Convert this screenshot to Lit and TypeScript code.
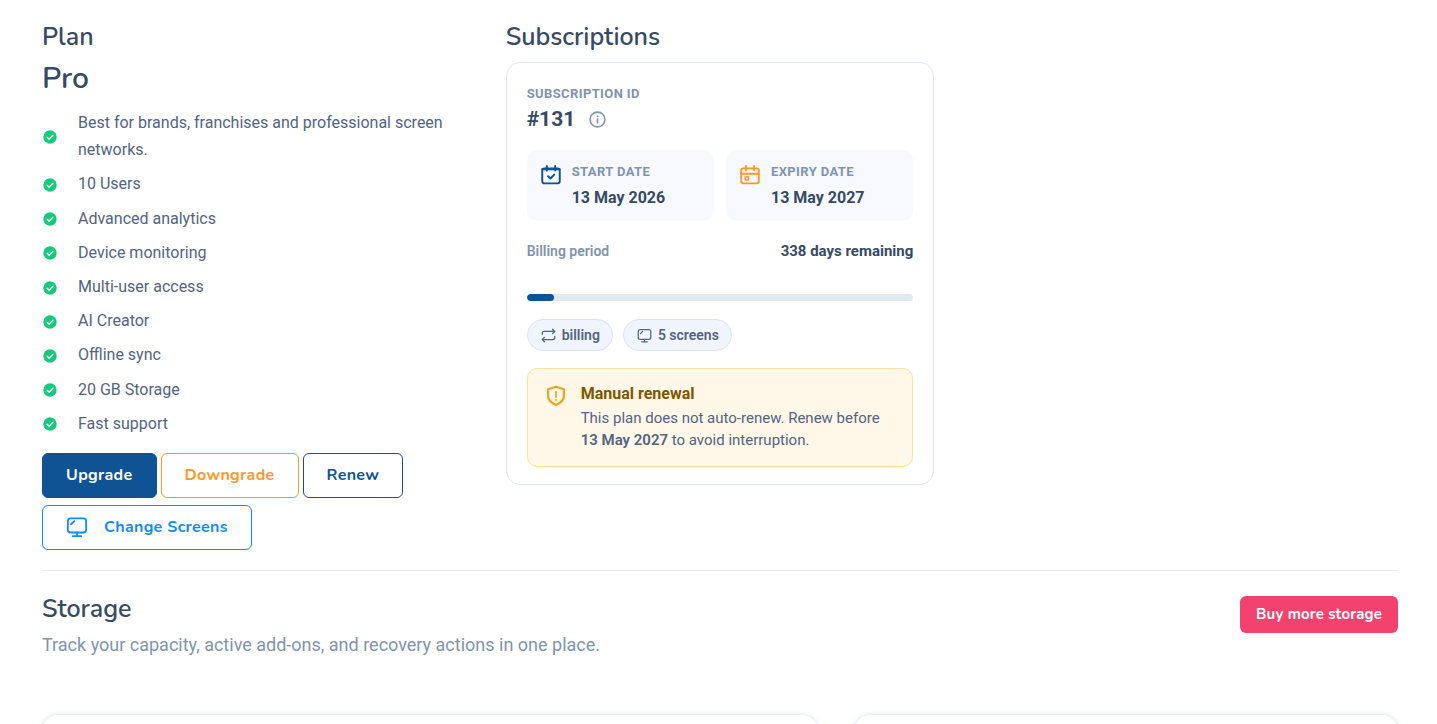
import { LitElement, html, css, svg } from "lit";
import { customElement, property } from "lit/decorators.js";

const glyphs: Record<string, unknown> = {
  check: svg`<circle cx="12" cy="12" r="11.5" fill="currentColor" stroke="none"/><path d="M7 12.4l3.4 3.3L17 9" stroke="#fff" stroke-width="2.4"/>`,
  screen: svg`<rect x="2" y="2.5" width="20" height="15.5" rx="3"/><path d="M12 18v4M7.5 22h9M5.5 9l3.5-3.5"/>`,
  info: svg`<circle cx="12" cy="12" r="10.5"/><path d="M12 11.500v5.500"/><circle cx="12" cy="7.3" r="1.3" fill="currentColor" stroke="none"/>`,
  calendarCheck: svg`<rect x="1.5" y="4" width="21" height="18" rx="2.5"/><path d="M1.5 5h21"/><path d="M7 1v5.5M17 1v5.5M8.500 13.5l2.700 2.700 4.800-4.700"/>`,
  calendar: svg`<rect x="1.5" y="4" width="21" height="18" rx="2.5"/><path d="M1.5 10.500h21M7 1v5.5M17 1v5.5"/><rect x="6.3" y="14.2" width="3.8" height="3.8" stroke-width="1.8" stroke-linejoin="miter"/>`,
  repeat: svg`<path d="M2 10.5V8.7Q2 5.5 5.2 5.5H22M18.5 2L22 5.5 18.5 9M22 13.5v1.8q0 3.2-3.2 3.2H2M5.5 15L2 18.5 5.5 22"/>`,
  shield: svg`<path d="M12 1L21.500 4v8.3c0 5-4.700 8.3-9.500 10.6-4.800-2.300-9.500-5.600-9.500-10.600V4z"/><path d="M12 7v6.500M12 16.300v1" stroke-width="2"/>`,
};

@customElement("ui-icon")
class UiIcon extends LitElement {
  @property() name = "check";
  static styles = css`
    :host { display: inline-flex; flex: none; width: 1em; height: 1em; }
    svg { display: block; width: 100%; height: 100%; fill: none; stroke: currentColor; stroke-width: var(--stroke, 2); stroke-linecap: round; stroke-linejoin: round; overflow: visible; }
  `;
  render() {
    return html`<svg viewBox="0 0 24 24" aria-hidden="true">${glyphs[this.name]}</svg>`;
  }
}

@customElement("app-root")
class AppRoot extends LitElement {
  features = [
    "Best for brands, franchises and professional screen networks.",
    "10 Users",
    "Advanced analytics",
    "Device monitoring",
    "Multi-user access",
    "AI Creator",
    "Offline sync",
    "20 GB Storage",
    "Fast support",
  ];
  elapsed = 7;

  static styles = css`
    :host { display: block; height: 100vh; overflow: hidden; box-sizing: border-box; background: #fff; color: #526484; font: 400 16px/1.7 Roboto, sans-serif; }
    *, *::before, *::after { box-sizing: border-box; }
    h2, h3, h4, p, ul, dl, dd { margin: 0; padding: 0; }
    .page { padding: 20px 39px 0 42px; }
    .columns { display: grid; grid-template-columns: repeat(3, minmax(0, 1fr)); gap: 35px; align-items: start; }
    .title { font: 650 25px/34px Nunito, Lato, sans-serif; color: #364a63; }
    .plan-name { margin-top: 7px; font: 650 30px/36px Nunito, Lato, sans-serif; color: #364a63; }
    .features { display: flex; flex-direction: column; gap: 7px; margin-top: 12px; list-style: none; }
    .feature { display: flex; align-items: center; gap: 21px; }
    .feature ui-icon { font-size: 14px; margin: 2px 0 0 1px; color: #16ca7c; }
    .actions { display: flex; flex-wrap: wrap; gap: 7px 4px; margin-top: 16px; }
    button { cursor: pointer; font-family: Nunito, Lato, sans-serif; }
    .button { display: inline-flex; align-items: center; justify-content: center; height: 45px; padding: 0 23px; border: 1px solid currentColor; border-radius: 6px; background: #fff; font-size: 16px; font-weight: 700; line-height: 24px; letter-spacing: 0.02em; }
    .primary { background: #105394; border-color: #105394; color: #fff; }
    .warning { color: #ff9829; }
    .outline { color: #105394; }
    .screens { gap: 16px; color: #0f8bff; }
    .screens ui-icon { font-size: 22px; }
    .card { margin-top: 8px; padding: 21px 20px 17px; border: 1px solid #e1e6ef; border-radius: 14px; }
    .label { font-size: 13px; font-weight: 700; line-height: 20px; letter-spacing: 0.03em; text-transform: uppercase; color: #8094ae; }
    .id-row { display: flex; align-items: center; gap: 14px; color: #364a63; }
    .id { font-size: 21px; font-weight: 700; line-height: 30px; }
    .info { display: inline-flex; padding: 0; border: 0; background: none; color: #8094ae; font-size: 17px; --stroke: 2.3; }
    .dates { display: grid; grid-template-columns: 1fr 1fr; gap: 12px; margin-top: 16px; }
    .date { display: flex; gap: 11px; padding: 12px 14px 7px; border-radius: 10px; background: #f8f9fe; --stroke: 2.3; }
    .date ui-icon { margin-top: 3px; font-size: 20px; }
    .start { color: #105394; }
    .expiry { color: #ff9829; }
    .value { font-weight: 700; line-height: 32px; color: #364a63; }
    .period { display: flex; justify-content: space-between; margin-top: 18px; font-size: 14px; line-height: 24px; font-weight: 600; color: #8094ae; }
    .remaining { font-size: 15px; font-weight: 700; color: #364a63; }
    .track { height: 7px; margin-top: 31px; border-radius: 4px; background: #e3e7ee; overflow: hidden; }
    .bar { height: 100%; border-radius: 4px; background: #105394; }
    .chips { display: flex; gap: 10px; margin-top: 18px; }
    .chip { display: inline-flex; align-items: center; gap: 6px; height: 32px; padding: 0 12px 0 13px; border: 1px solid #dbe3ef; border-radius: 16px; background: #f0f4fd; font-size: 14px; font-weight: 600; line-height: 20px; }
    .chip ui-icon { font-size: 15px; }
    .notice { display: flex; gap: 15px; margin-top: 17px; padding: 12px 18px 15px; border: 1px solid #ffe0a0; border-radius: 10px; background: #fff7e7; font-size: 15px; line-height: 22px; --stroke: 2.6; }
    .notice ui-icon { margin-top: 5px; font-size: 20px; color: #eba51c; }
    .notice-title { font-size: 16px; font-weight: 700; line-height: 26px; color: #7f5700; }
    strong { font-weight: 600; }
    .storage { margin-top: 20px; padding-top: 21px; border-top: 1px solid #e9edf2; }
    .storage-head { display: flex; align-items: flex-start; justify-content: space-between; gap: 24px; }
    .lead { margin-top: 4px; font-size: 18px; line-height: 30px; color: #8094ae; }
    .buy { height: 37px; margin-top: 4px; padding: 0 16px; border: 0; border-radius: 6px; background: #f3426e; color: #fff; font-size: 15px; font-weight: 700; letter-spacing: 0.01em; }
    .panels { display: grid; grid-template-columns: repeat(12, minmax(0, 1fr)); gap: 36px; margin-top: 55px; }
    .panel { grid-column: span 7; height: 180px; border-radius: 16px; box-shadow: 0 0 4px 1px #dfe6f0; }
    .side { grid-column: span 5; }
  `;

  render() {
    return html`<main class="page">
      <div class="columns">
        <section>
          <h2 class="title">Plan</h2>
          <h3 class="plan-name">Pro</h3>
          <ul class="features">
            ${this.features.map((f) => html`<li class="feature"><ui-icon name="check"></ui-icon><span>${f}</span></li>`)}
          </ul>
          <div class="actions">
            <button class="button primary">Upgrade</button>
            <button class="button warning">Downgrade</button>
            <button class="button outline">Renew</button>
            <button class="button screens"><ui-icon name="screen"></ui-icon>Change Screens</button>
          </div>
        </section>
        <section>
          <h2 class="title">Subscriptions</h2>
          <article class="card">
            <p class="label">Subscription ID</p>
            <div class="id-row">
              <span class="id">#131</span>
              <button class="info" aria-label="Subscription details"><ui-icon name="info"></ui-icon></button>
            </div>
            <div class="dates">
              <div class="date start"><ui-icon name="calendarCheck"></ui-icon>
                <dl><dt class="label">Start date</dt><dd class="value">13 May 2026</dd></dl></div>
              <div class="date expiry"><ui-icon name="calendar"></ui-icon>
                <dl><dt class="label">Expiry date</dt><dd class="value">13 May 2027</dd></dl></div>
            </div>
            <div class="period"><span>Billing period</span><span class="remaining">338 days remaining</span></div>
            <div class="track" role="progressbar" aria-label="Billing period" aria-valuenow=${this.elapsed}>
              <div class="bar" style="width:${this.elapsed}%"></div>
            </div>
            <div class="chips">
              <span class="chip"><ui-icon name="repeat"></ui-icon>billing</span>
              <span class="chip"><ui-icon name="screen"></ui-icon>5 screens</span>
            </div>
            <div class="notice">
              <ui-icon name="shield"></ui-icon>
              <div>
                <h4 class="notice-title">Manual renewal</h4>
                <p>This plan does not auto-renew. Renew before <strong>13 May 2027</strong> to avoid interruption.</p>
              </div>
            </div>
          </article>
        </section>
      </div>
      <section class="storage">
        <div class="storage-head">
          <div>
            <h2 class="title">Storage</h2>
            <p class="lead">Track your capacity, active add-ons, and recovery actions in one place.</p>
          </div>
          <button class="buy">Buy more storage</button>
        </div>
        <div class="panels">
          <div class="panel"></div>
          <div class="panel side"></div>
        </div>
      </section>
    </main>`;
  }
}
